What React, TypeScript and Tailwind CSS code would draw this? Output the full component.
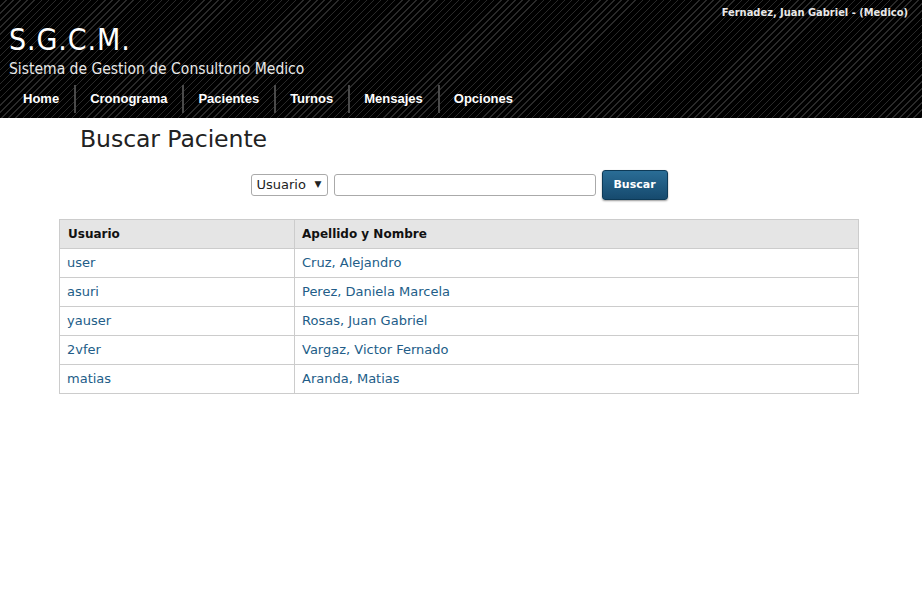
const pacientes = [
  { usuario: "user", nombre: "Cruz, Alejandro" },
  { usuario: "asuri", nombre: "Perez, Daniela Marcela" },
  { usuario: "yauser", nombre: "Rosas, Juan Gabriel" },
  { usuario: "2vfer", nombre: "Vargaz, Victor Fernado" },
  { usuario: "matias", nombre: "Aranda, Matias" },
];

const menu = ["Home", "Cronograma", "Pacientes", "Turnos", "Mensajes", "Opciones"];

export default function App() {
  return (
    <div className="min-h-[611px] bg-white font-['DejaVu_Sans',Verdana,sans-serif]">
      {/* cabecera */}
      <div className="h-[118px] bg-black bg-[repeating-linear-gradient(135deg,#000_0px,#000_4px,#2a2a2a_4px,#2a2a2a_5px)] relative">
        <div className="absolute right-[14px] top-[5px] text-[11px] font-bold text-[#e8e8e8] font-['DejaVu_Sans_Condensed','DejaVu_Sans',sans-serif]">
          Fernadez, Juan Gabriel - (Medico)
        </div>
        <div className="pl-[9px] pt-[23px]">
          <div className="text-[30px] leading-[34px] text-white font-['DejaVu_Sans_Condensed','DejaVu_Sans',sans-serif] tracking-[0.9px]">S.G.C.M.</div>
          <div className="text-[15.5px] leading-[20px] text-[#e8e8e8] font-['DejaVu_Sans_Condensed','DejaVu_Sans',sans-serif] mt-[2px]">
            Sistema de Gestion de Consultorio Medico
          </div>
        </div>
        <ul className="flex pl-[9px] mt-[6px]">
          {menu.map((m, i) => (
            <li
              key={m}
              className={
                "pl-[14px] pr-[15px] h-[28px] flex items-center text-[13px] font-bold text-white font-['Liberation_Sans',Arial,sans-serif] " +
                (i < menu.length - 1 ? "border-r-2 border-[#4a4a4a]" : "")
              }
            >
              {m}
            </li>
          ))}
        </ul>
      </div>

      {/* contenido */}
      <div className="px-[59px] pr-[63px]">
        <h1 className="text-[23.6px] leading-[30px] text-[#222] pl-[21px] mt-[6px] font-['DejaVu_Sans',Verdana,sans-serif] tracking-[-0.1px]">
          Buscar Paciente
        </h1>

        <div className="flex justify-center items-center gap-[6px] mt-[16px]">
          <div className="w-[77px] h-[22px] border border-[#aaa] rounded-[3px] flex items-center justify-between px-[5px] text-[13px] text-[#222]">
            <span>Usuario</span>
            <span className="text-[9px]">▼</span>
          </div>
          <input className="w-[262px] h-[22px] border border-[#aaa] rounded-[3px] outline-none" />
          <button className="w-[66px] h-[30px] rounded-[3px] border border-[#0d3a57] bg-gradient-to-b from-[#2a6d96] to-[#164a6e] text-white text-[11px] font-bold shadow-[0_1px_2px_rgba(0,0,0,0.4)]">
            Buscar
          </button>
        </div>

        <table className="w-[800px] mt-[19px] border-collapse text-[13px] font-['DejaVu_Sans',Verdana,sans-serif]">
          <thead>
            <tr className="bg-[#e5e5e5] h-[29px]">
              <th className="w-[235px] text-left font-bold text-[12px] text-[#111] px-[8px] border border-[#ccc]">Usuario</th>
              <th className="text-left font-bold text-[12px] text-[#111] px-[7px] border border-[#ccc]">Apellido y Nombre</th>
            </tr>
          </thead>
          <tbody>
            {pacientes.map((p) => (
              <tr key={p.usuario} className="h-[29px]">
                <td className="px-[7px] border border-[#ccc] text-[#225d88]">{p.usuario}</td>
                <td className="px-[7px] border border-[#ccc] text-[#225d88]">{p.nombre}</td>
              </tr>
            ))}
          </tbody>
        </table>
      </div>
    </div>
  );
}
